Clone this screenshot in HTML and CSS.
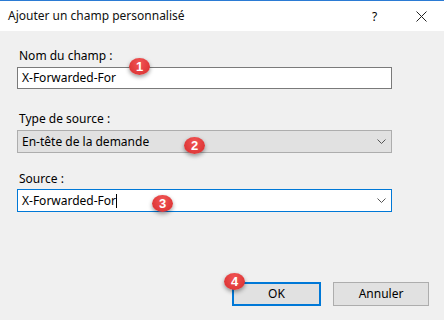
FILE: index.html
```html
<!DOCTYPE html>
<html lang="fr">
<head>
  <meta charset="UTF-8">
  <title>Ajouter un champ personnalisé</title>
  <link rel="stylesheet" href="styles.css">
</head>
<body>
<div class="dlg">
  <div class="titlebar">
    <span class="title">Ajouter un champ personnalisé</span>
    <span class="help">?</span>
    <span class="close">
      <svg width="11" height="11" viewBox="0 0 11 11"><path d="M0.5 0.5L10.5 10.5M10.5 0.5L0.5 10.5" stroke="#222" stroke-width="1"/></svg>
    </span>
  </div>
  <div class="content">
    <div class="group g1">
      <div class="lbl">Nom du champ :</div>
      <div class="box txt">X-Forwarded-For</div>
      <span class="badge b1">1</span>
    </div>
    <div class="group g2">
      <div class="lbl">Type de source :</div>
      <div class="box sel">
        <span>En-tête de la demande</span>
        <svg class="chev" width="9" height="5" viewBox="0 0 9 5"><path d="M0.5 0.5L4.5 4.5L8.5 0.5" fill="none" stroke="#555" stroke-width="1"/></svg>
      </div>
      <span class="badge b2">2</span>
    </div>
    <div class="group g3">
      <div class="lbl">Source :</div>
      <div class="box combo">
        <span>X-Forwarded-For<i class="caret"></i></span>
        <svg class="chev" width="9" height="5" viewBox="0 0 9 5"><path d="M0.5 0.5L4.5 4.5L8.5 0.5" fill="none" stroke="#555" stroke-width="1"/></svg>
      </div>
      <span class="badge b3">3</span>
    </div>
    <div class="buttons">
      <div class="btn ok">OK<span class="badge b4">4</span></div>
      <div class="btn">Annuler</div>
    </div>
  </div>
</div>
</body>
</html>
```

FILE: styles.css
```css
*{
  margin: 0;
  padding: 0;
  box-sizing: border-box;
}
body{
  width: 444px;
  height: 320px;
  overflow: hidden;
  background: #f0f0f0;
  font-family: "Noto Sans", "Open Sans", sans-serif;
  font-size: 12px;
  color: #000;
}
.dlg{
  height: 320px;
  border-top: 1px solid #2b7bd4;
}
.titlebar{
  height: 30px;
  background: #fff;
  display: flex;
  align-items: center;
  padding-left: 8px;
}
.title{
  flex: 1;
  font-size: 12px;
  color: #111;
  padding-bottom: 1px;
}
.help{
  width: 20px;
  font-size: 12px;
  margin-right: 24px;
}
.close{
  width: 28px;
  display: flex;
  align-items: center;
}
.content{
  padding: 17px 15px 0 17px;
}
.group{
  position: relative;
  width: 375px;
}
.g2{
  margin-top: 22px;
}
.g3{
  margin-top: 18px;
}
.lbl{
  height: 16px;
  line-height: 16px;
  padding-left: 2px;
  margin-bottom: 3px;
}
.g3 .lbl{
  margin-bottom: 2px;
}
.box{
  height: 22px;
  line-height: 20px;
  padding-left: 4px;
  border: 1px solid #7a7a7a;
  background: #fff;
  display: flex;
  align-items: center;
}
.sel{
  height: 23px;
  background: #e1e1e1;
  border-color: #adadad;
}
.combo{
  height: 23px;
  border-color: #0078d7;
}
.box span{
  flex: 1;
}
.chev{
  margin-right: 5px;
}
.caret{
  display: inline-block;
  width: 1px;
  height: 14px;
  background: #000;
  vertical-align: -3px;
}
.buttons{
  display: flex;
  justify-content: flex-end;
  gap: 12px;
  margin-top: 70px;
}
.btn{
  position: relative;
  width: 96px;
  height: 24px;
  line-height: 22px;
  text-align: center;
  background: #e1e1e1;
  border: 1px solid #adadad;
}
.ok{
  width: 89px;
  border: 2px solid #0078d7;
  line-height: 20px;
}
.badge{
  position: absolute;
  width: 21px;
  height: 17px;
  border-radius: 50%;
  background: radial-gradient(ellipse at 50% 30%, #f25555, #d62c2c);
  color: #fff;
  font-family: "Liberation Sans", sans-serif;
  font-size: 13px;
  font-weight: bold;
  line-height: 17px;
  text-align: center;
  box-shadow: 0 2px 4px rgba(0,0,0,.4);
}
.b1{ left: 112px; top: 10px; }
.b2{ left: 167px; top: 26px; }
.b3{ left: 135px; top: 24px; }
.b4{ left: -10px; top: -11px; }
```
